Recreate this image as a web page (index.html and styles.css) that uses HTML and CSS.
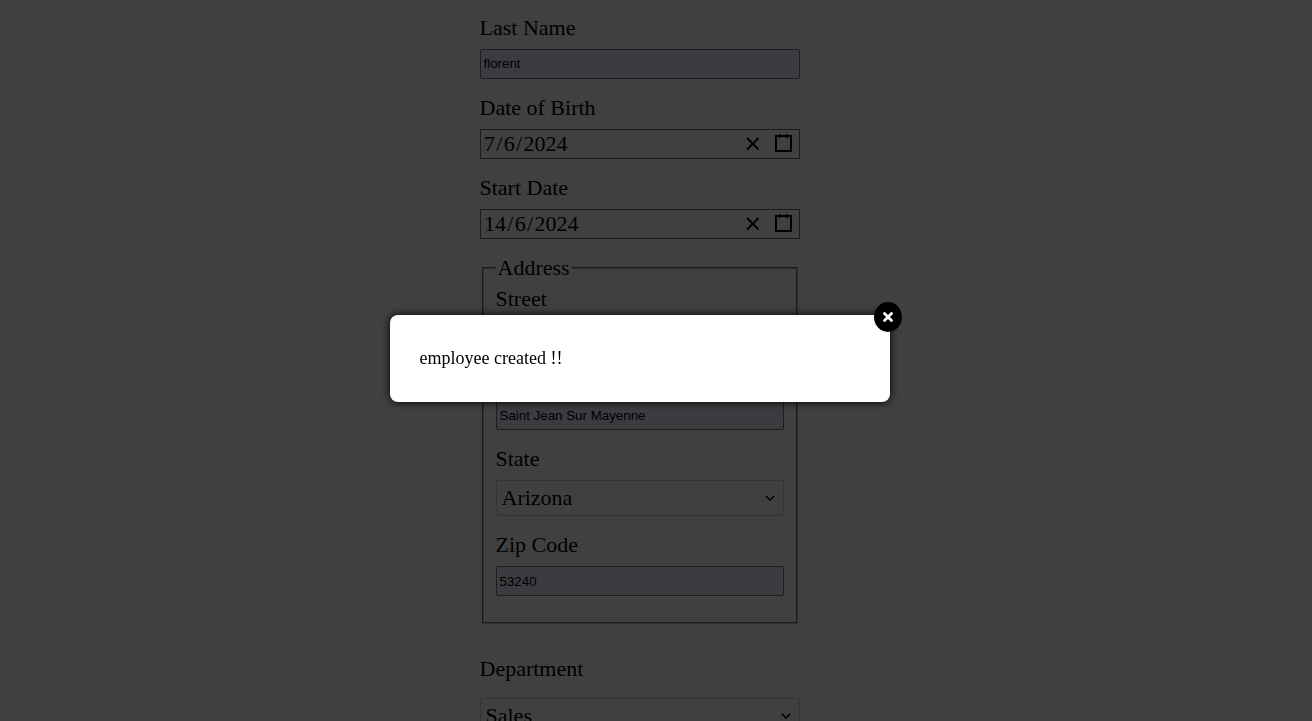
FILE: index.html
```html
<!DOCTYPE html>
<html lang="en">
<head>
<meta charset="utf-8">
<title>Create Employee</title>
<link rel="stylesheet" href="styles.css">
</head>
<body>
<svg class="defs" aria-hidden="true">
  <symbol id="clear" viewBox="0 0 14 14"><path d="M1 1 12.500 12.500M12.500 1 1 12.500" fill="none" stroke="#000" stroke-width="1.800"/></symbol>
  <symbol id="calendar" viewBox="0 0 17 18"><path d="M1 2h15v15H1z" fill="none" stroke="#000" stroke-width="2"/><path d="M4 0h2v4H4zM11 0h2v4h-2z"/></symbol>
  <symbol id="chevron" viewBox="0 0 10 6"><path d="M.7.7 5 5 9.300.7" fill="none" stroke="#000" stroke-width="1.500"/></symbol>
</svg>
<form class="form">
  <div class="field"><span class="label">Last Name</span><div class="input input-first">florent</div></div>
  <div class="field"><span class="label">Date of Birth</span>
    <div class="date"><span class="date-value">7<span class="slash">/</span>6<span class="slash">/</span>2024</span><svg class="clear"><use href="#clear"/></svg><svg class="calendar"><use href="#calendar"/></svg></div></div>
  <div class="field"><span class="label">Start Date</span>
    <div class="date"><span class="date-value">14<span class="slash">/</span>6<span class="slash">/</span>2024</span><svg class="clear"><use href="#clear"/></svg><svg class="calendar"><use href="#calendar"/></svg></div></div>
  <fieldset class="address">
    <legend class="legend">Address</legend>
    <div class="field"><span class="label">Street</span><div class="input"></div></div>
    <div class="field"><span class="label">City</span><div class="input">Saint Jean Sur Mayenne</div></div>
    <div class="field"><span class="label">State</span><div class="select"><span>Arizona</span><svg class="chevron"><use href="#chevron"/></svg></div></div>
    <div class="field"><span class="label">Zip Code</span><div class="input">53240</div></div>
  </fieldset>
  <div class="field"><span class="label label-wide">Department</span><div class="select"><span>Sales</span><svg class="chevron"><use href="#chevron"/></svg></div></div>
</form>
<div class="overlay">
  <div class="modal">
    <p class="message">employee created !!</p>
    <button class="close" type="button" aria-label="Close"><svg class="cross" viewBox="0 0 12 12"><path d="M2.500 2.500 9.500 9.500M9.500 2.500 2.500 9.500" stroke="#fff" stroke-width="2.800" stroke-linecap="round"/></svg></button>
  </div>
</div>
</body>
</html>
```
FILE: styles.css
```css
* { box-sizing: border-box; }
body {
  margin: 0;
  height: 721px;
  overflow: hidden;
  background: #fff;
  color: #000;
  font-family: "Liberation Serif", "Times New Roman", serif;
  font-size: 22px;
}
.defs { display: none; }
.form { width: 320px; margin-left: 480px; padding-top: 13px; }
.field { margin-bottom: 14px; }
.label { display: block; height: 36px; line-height: 30px; text-indent: -0.5px; }
.label-wide { height: 44px; }
.input {
  display: flex;
  align-items: center;
  height: 30px;
  padding: 0 2.5px;
  border: 1px solid #767676;
  border-radius: 2px;
  background: #e8f0fe;
  font: 13.333px "Liberation Sans", Arial, sans-serif;
}
.input-first { padding-bottom: 2px; }
.date {
  display: flex;
  align-items: center;
  height: 30px;
  padding: 0 7px 0 3px;
  border: 1px solid #767676;
}
.date-value { flex: 1; }
.slash { padding: 0 1.3px; }
.clear { width: 14px; height: 14px; margin-right: 15px; }
.calendar { width: 17px; height: 18px; margin-top: -2px; }
.address {
  min-width: 0;
  margin: 16px 2px 30px;
  padding: 3px 12px 12px;
  border: 2px groove #c0c0c0;
}
.legend { height: 26px; padding: 0 2px; line-height: 26px; text-indent: -0.5px; }
.select {
  display: flex;
  align-items: center;
  justify-content: space-between;
  height: 36px;
  padding: 0 8px 0 4.5px;
  border: 1px solid #d0d0d0;
  border-radius: 2px;
}
.chevron { width: 10px; height: 6px; }
.overlay {
  position: fixed;
  inset: 0;
  padding: 315px 0 0 390px;
  background: rgba(0, 0, 0, 0.75);
}
.modal {
  position: relative;
  width: 500px;
  height: 87px;
  padding: 30px 29.5px;
  border-radius: 8px;
  background: #fff;
  box-shadow: 0 0 10px #000;
}
.message { margin: 0; font-size: 18px; line-height: 27px; }
.close {
  position: absolute;
  top: -13px;
  right: -12px;
  display: flex;
  align-items: center;
  justify-content: center;
  width: 28px;
  height: 30px;
  padding: 0;
  border: 0;
  border-radius: 50%;
  background: #000;
}
.cross { width: 12px; height: 12px; }
```
